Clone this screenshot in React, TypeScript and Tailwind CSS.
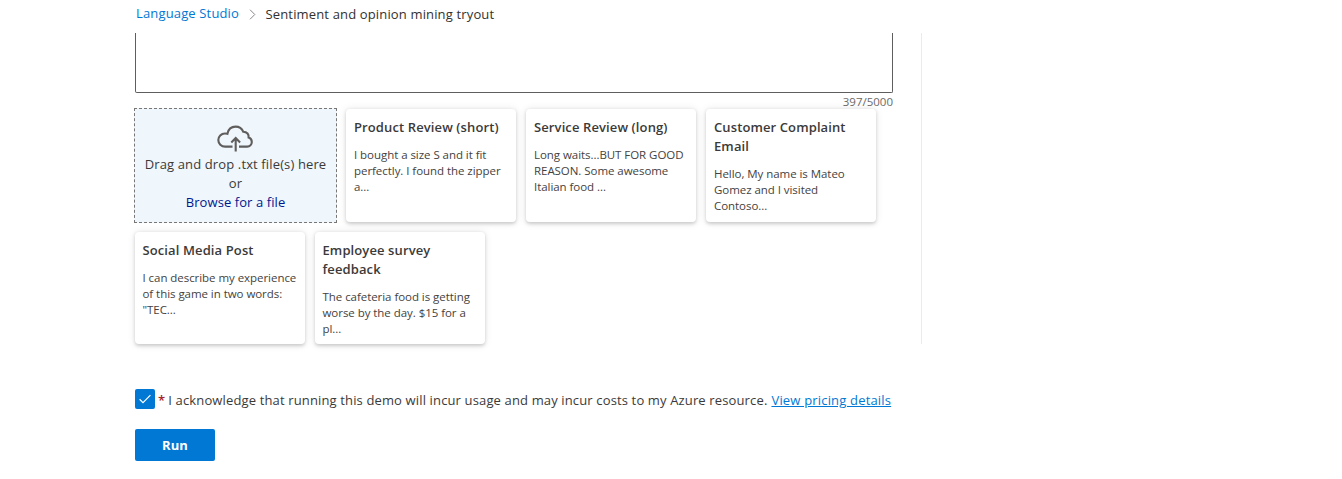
type Sample = { title: string[]; body: string[] };

const firstRow: Sample[] = [
  { title: ['Product Review (short)'], body: ['I bought a size S and it fit', 'perfectly. I found the zipper', 'a...'] },
  { title: ['Service Review (long)'], body: ['Long waits...BUT FOR GOOD', 'REASON. Some awesome', 'Italian food ...'] },
  { title: ['Customer Complaint', 'Email'], body: ['Hello, My name is Mateo', 'Gomez and I visited', 'Contoso...'] },
];

const secondRow: Sample[] = [
  { title: ['Social Media Post'], body: ['I can describe my experience', 'of this game in two words:', '"TEC...'] },
  { title: ['Employee survey', 'feedback'], body: ['The cafeteria food is getting', 'worse by the day. $15 for a', 'pl...'] },
];

function SampleCard({ title, body }: Sample) {
  return (
    <button className="flex h-full w-[170px] flex-col items-start rounded bg-white pt-[9px] text-left whitespace-nowrap shadow-[0_1.6px_3.6px_0_rgba(0,0,0,0.16),0_0.3px_9px_0_rgba(0,0,0,0.09)]">
      <span className="mb-[10px] pl-[inherit] text-[13px] leading-[19px] font-semibold tracking-[0.11px] text-[#3b3a39]">
        {title.map((line) => <span key={line} className="block">{line}</span>)}
      </span>
      <span className="pl-[inherit] text-[11.5px] leading-4 tracking-[-0.05px] text-[#444240]">
        {body.map((line) => <span key={line} className="block">{line}</span>)}
      </span>
    </button>
  );
}

function CloudUpload() {
  return (
    <svg className="mt-4 mr-px h-[27px] w-9" viewBox="0 0 36 27" fill="none" stroke="#605e5c" strokeWidth="2.1">
      <path d="M15.5 21.6H8.2C4.3 21.6 1.3 18.7 1.3 15.1C1.3 11.4 4.2 8.5 7.9 8.5C8.8 8.5 9.6 8.5 10.4 8.8C11.3 4.4 14.6 1.6 18.6 1.6C22.3 1.6 25 3.7 26.2 6.7C30.2 6.8 32 9.4 31.6 12.6C33.7 13.3 34.8 15.2 34.8 17.1C34.8 19.7 32.8 21.6 30.2 21.6H22" />
      <path d="M18.7 26.6V13.2M14.3 17.4L18.7 13L23.1 17.4" />
    </svg>
  );
}

export default function App() {
  return (
    <div className="h-[479px] overflow-hidden bg-white pl-[135px] font-['Open_Sans','Noto_Sans',sans-serif] text-[13px] tracking-[0.15px] text-[#3b3a39]">
      <nav className="flex h-[33px] items-start whitespace-nowrap">
        <a className="ml-px w-[104px] pt-1 leading-[19px] text-[#0078d4]">Language Studio</a>
        <svg className="mt-[9px] ml-[9px] h-[11px] w-[7px]" viewBox="0 0 7 11" fill="none" stroke="#8a8886"><path d="M1 .7L5.8 5.5L1 10.3" /></svg>
        <span className="ml-[9.5px] pt-[5px] leading-[19px] text-[#323130]">Sentiment and opinion mining tryout</span>
      </nav>

      <main className="h-[311px] w-[787px] border-r border-[#edebe9]">
        <div className="h-[60px] w-[758px] rounded-b-[2px] border-x border-b border-[#605e5c]" />
        <div className="flex h-[15px] w-[758px] justify-end text-[11.5px] leading-[17px] tracking-normal text-[#6c6a68]">397/5000</div>
        <div className="-ml-px flex">
          <div className="mr-[9px] flex h-[115px] w-[203px] flex-col items-center border border-dashed border-[#797775] bg-[#eff6fc] text-center leading-[19px] whitespace-nowrap">
            <CloudUpload />
            <span className="mt-[3px] tracking-[0.13px]">Drag and drop .txt file(s) here</span>
            <span>or</span>
            <a className="tracking-[0.08px] text-[#00188f]">Browse for a file</a>
          </div>
          <div className="flex h-[114px] gap-[10px] pt-px *:pl-0 *:*:pl-2">
            {firstRow.map((s) => <SampleCard key={s.title[0]} {...s} />)}
          </div>
        </div>
        <div className="mt-[9px] flex h-[112px] gap-[10px] *:pl-0 *:*:pl-[7.5px]">
          {secondRow.map((s) => <SampleCard key={s.title[0]} {...s} />)}
        </div>
      </main>

      <div className="mt-[45px] flex h-5 items-center whitespace-nowrap">
        <span className="flex size-5 items-center justify-center rounded-[2px] bg-[#0078d4]">
          <svg className="h-[10px] w-3" viewBox="0 0 12 10" fill="none" stroke="white" strokeWidth="1.2"><path d="M.6 5.3L4 8.6L11.4 1.2" /></svg>
        </span>
        <span className="ml-[3px] pt-[3px] font-semibold text-[#a4262c]">*</span>
        <span className="ml-[3px] pt-[3px] tracking-[0.14px]">I acknowledge that running this demo will incur usage and may incur costs to my Azure resource.</span>
        <a className="ml-1 pt-[3px] tracking-[0.18px] text-[#0078d4] underline">View pricing details</a>
      </div>
      <button className="mt-5 flex h-8 w-20 items-center justify-center rounded-[2px] bg-[#0078d4] pt-px font-bold text-white">Run</button>
    </div>
  );
}
